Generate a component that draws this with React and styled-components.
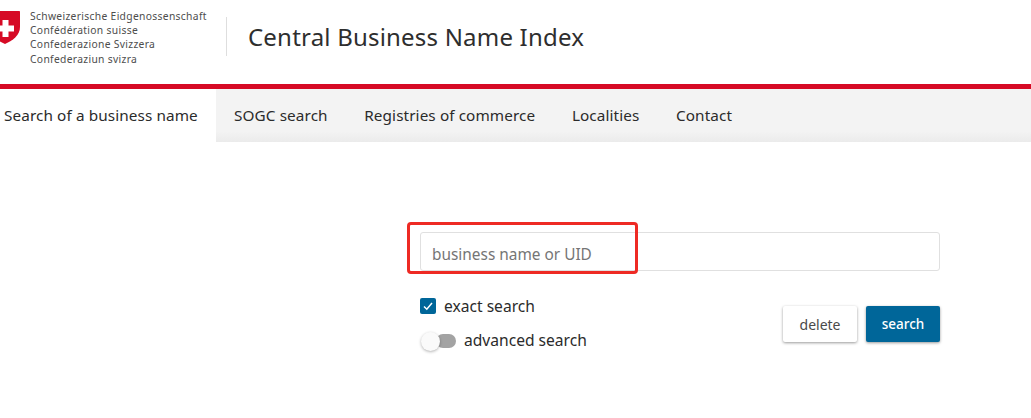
import React from "react";
import styled, { createGlobalStyle } from "styled-components";

const GlobalStyle = createGlobalStyle`
  html, body {
    margin: 0;
    padding: 0;
    background: #ffffff;
    overflow: hidden;
    font-family: "Noto Sans", "Open Sans", sans-serif;
    color: #2b2b2b;
  }
`;

const Page = styled.div`
  position: relative;
  width: 1031px;
  height: 418px;
  overflow: hidden;
`;

const Header = styled.header`
  display: flex;
  align-items: center;
  height: 84px;
  box-sizing: border-box;
  padding-bottom: 11px;
`;

const Brand = styled.div`
  display: flex;
  align-items: flex-start;
  width: 226px;
  height: 56px;
`;

const Shield = styled.svg`
  display: block;
  width: 30px;
  height: 33px;
  margin: 2px 10px 0 -10px;
  flex: none;
`;

const BrandText = styled.div`
  font-size: 10.3px;
  line-height: 14.4px;
  letter-spacing: 0.32px;
  color: #4d4d4d;
  white-space: nowrap;
`;

const Title = styled.h1`
  margin: 0;
  height: 39px;
  padding-left: 21px;
  border-left: 1px solid #dedede;
  font-size: 24px;
  font-weight: 400;
  line-height: 39px;
  letter-spacing: 0.2px;
  color: #2e2e2e;
  white-space: nowrap;
`;

const Nav = styled.nav`
  display: flex;
  height: 53px;
  border-top: 5px solid #d60a25;
  background: linear-gradient(#f3f3f3, #f3f3f3 80%, #ebebeb);
`;

const Tab = styled.a`
  display: flex;
  align-items: center;
  padding: 0 18.3px 2px 18.3px;
  padding-left: ${(p) => (p.$active ? "4px" : "18.3px")};
  padding-right: ${(p) => (p.$active ? "18px" : "18.3px")};
  background: ${(p) => (p.$active ? "#ffffff" : "transparent")};
  font-size: 15.3px;
  letter-spacing: 0.1px;
  color: #2b2b2b;
  white-space: nowrap;
`;

const Form = styled.form`
  width: 520px;
  margin: 90px 0 0 420px;
`;

const SearchInput = styled.input`
  display: block;
  width: 100%;
  height: 39px;
  box-sizing: border-box;
  padding: 5px 11px 0;
  border: 1px solid #e0e0e0;
  border-radius: 3px;
  background: #ffffff;
  font-family: inherit;
  font-size: 15.4px;
  outline: none;

  &::placeholder {
    color: #757575;
    opacity: 1;
  }
`;

const Controls = styled.div`
  display: flex;
  justify-content: space-between;
  align-items: flex-start;
  margin-top: 24px;
`;

const Options = styled.div`
  display: flex;
  flex-direction: column;
  gap: 12px;
`;

const Option = styled.label`
  display: flex;
  align-items: center;
  height: 22px;
  font-size: 15.6px;
  color: #2b2b2b;
  white-space: nowrap;
`;

const CheckBox = styled.span`
  display: flex;
  align-items: center;
  justify-content: center;
  width: 16px;
  height: 16px;
  margin-right: 8px;
  border-radius: 2px;
  background: #006699;
`;

const Toggle = styled.span`
  position: relative;
  display: block;
  width: 36px;
  height: 14px;
  margin: 1px 8px 0 0;
  &::before {
    content: "";
    position: absolute;
    left: 16px;
    top: 0;
    width: 20px;
    height: 14px;
    border-radius: 7px;
    background: #a3a3a3;
  }
  &::after {
    content: "";
    position: absolute;
    left: 1px;
    top: -2px;
    width: 19px;
    height: 19px;
    border-radius: 50%;
    background: #fafafa;
    box-shadow: 0 1px 3px rgba(0, 0, 0, 0.3);
  }
`;

const Buttons = styled.div`
  display: flex;
  gap: 9px;
  margin-top: 11px;
`;

const Button = styled.button`
  width: 74px;
  height: 36px;
  padding: 0;
  border: 0;
  border-radius: 2px;
  background: ${(p) => (p.$primary ? "#006699" : "#ffffff")};
  color: ${(p) => (p.$primary ? "#ffffff" : "#4a4a4a")};
  font-family: inherit;
  font-size: ${(p) => (p.$primary ? "13.5px" : "14px")};
  font-weight: ${(p) => (p.$primary ? 500 : 400)};
  box-shadow: 0 1px 3px rgba(0, 0, 0, 0.4);
`;

// red box somebody drew on the screenshot
const Annotation = styled.div`
  position: absolute;
  left: 407px;
  top: 222px;
  width: 231px;
  height: 52px;
  box-sizing: border-box;
  border: 3px solid #ee2a24;
  border-radius: 4px;
  pointer-events: none;
`;

const tabs = [
  "Search of a business name",
  "SOGC search",
  "Registries of commerce",
  "Localities",
  "Contact",
];

export default function App() {
  return (
    <Page>
      <GlobalStyle />
      <Header>
        <Brand>
          <Shield viewBox="0 0 30 33">
            <path d="M1 0h28c.6 0 1 .4 1 1v15c0 8-7 13.500-15 17C7 29.500 0 24 0 16V1c0-.6.4-1 1-1z" fill="#d60a25" />
            <path d="M12.500 9h6v5.500H24v6h-5.500V26h-6v-5.500H7v-6h5.500z" fill="#ffffff" />
          </Shield>
          <BrandText>
            Schweizerische Eidgenossenschaft
            <br />
            Confédération suisse
            <br />
            Confederazione Svizzera
            <br />
            Confederaziun svizra
          </BrandText>
        </Brand>
        <Title>Central Business Name Index</Title>
      </Header>
      <Nav>
        {tabs.map((t, i) => (
          <Tab key={t} $active={i === 0}>
            {t}
          </Tab>
        ))}
      </Nav>
      <Form onSubmit={(e) => e.preventDefault()}>
        <SearchInput placeholder="business name or UID" />
        <Controls>
          <Options>
            <Option>
              <CheckBox>
                <svg width="12" height="12" viewBox="0 0 12 12" fill="none">
                  <path d="M2 6.500l2.800 2.700L10 3" stroke="#ffffff" strokeWidth="1.500" />
                </svg>
              </CheckBox>
              exact search
            </Option>
            <Option>
              <Toggle />
              advanced search
            </Option>
          </Options>
          <Buttons>
            <Button type="button">delete</Button>
            <Button type="submit" $primary>
              search
            </Button>
          </Buttons>
        </Controls>
      </Form>
      <Annotation />
    </Page>
  );
}
